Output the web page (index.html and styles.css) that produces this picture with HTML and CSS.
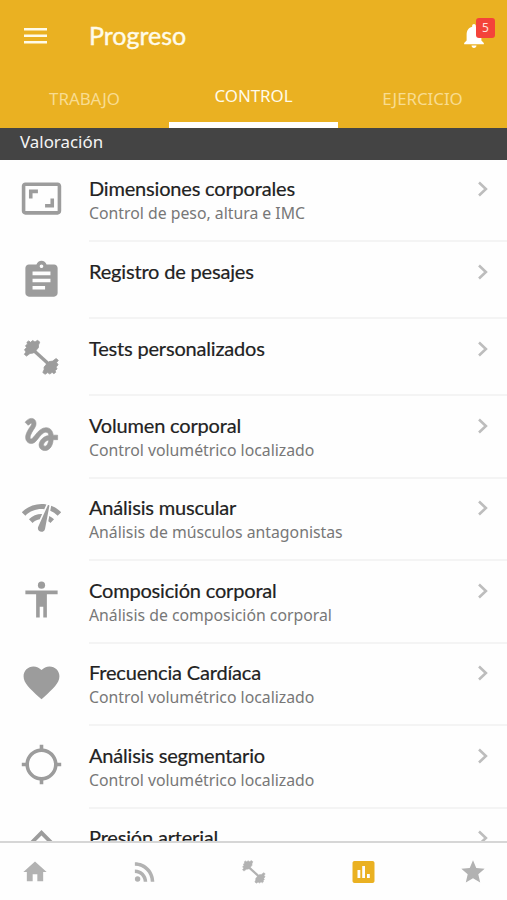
FILE: index.html
```
<!DOCTYPE html>
<html lang="es">
<head>
<meta charset="utf-8">
<meta name="viewport" content="width=device-width, initial-scale=1">
<title>Progreso</title>
<link rel="stylesheet" href="styles.css">
</head>
<body>
<svg class="defs" width="0" height="0" aria-hidden="true">
  <symbol id="chevron" viewBox="0 0 12 16"><path d="M2 1.5 8.9 8 2 14.5" fill="none" stroke="currentColor" stroke-width="2.6"/></symbol>
  <symbol id="dumbbell" viewBox="0 0 36 36">
    <path d="M7 8 29 28" fill="none" stroke="currentColor" stroke-width="3.4"/>
    <path id="plates" stroke="currentColor" stroke-width=".8" stroke-linejoin="round" d="M.8 14.800 2.500 12.500 1 10.300 3 8 2 6.200 4 4.500 3.400 2.800 5.200 1.400 7 2.800 9.200 1 11.500 2.500 14 .8 16.300 2.600 15 5.500 15 8 12.500 11 10 13.500 6.500 14 3 16.600Z"/>
    <use href="#plates" transform="rotate(180 17.8 17.8)"/>
  </symbol>
</svg>
<div class="app">
  <header class="header">
    <div class="bar">
      <svg class="menu" viewBox="0 0 23 16"><path d="M0 1.3h23M0 7.7h23M0 14.2h23" stroke="currentColor" stroke-width="2.5"/></svg>
      <h1 class="heading">Progreso</h1>
      <div class="alerts">
        <svg class="bell" viewBox="4 2.5 16 19.5"><path d="M12 22c1.1 0 2-.9 2-2h-4c0 1.1.89 2 2 2zm6-6v-5c0-3.07-1.64-5.64-4.5-6.32V4c0-.83-.67-1.5-1.5-1.5s-1.5.67-1.5 1.5v.68C7.63 5.36 6 7.92 6 11v5l-2 2v1h16v-1l-2-2z"/></svg>
        <span class="badge">5</span>
      </div>
    </div>
    <nav class="tabs">
      <a class="tab">TRABAJO</a>
      <a class="tab active">CONTROL</a>
      <a class="tab">EJERCICIO</a>
    </nav>
  </header>
  <h2 class="section">Valoración</h2>
  <main class="list">
    <article class="row">
      <svg class="icon" viewBox="0 0 24 24"><path d="M19 12h-2v3h-3v2h5v-5zM7 9h3V7H5v5h2V9zm14-6H3c-1.1 0-2 .9-2 2v14c0 1.1.9 2 2 2h18c1.1 0 2-.9 2-2V5c0-1.1-.9-2-2-2zm0 16.01H3V4.99h18v14.02z"/></svg>
      <div class="body"><div class="text"><h3>Dimensiones corporales</h3><p>Control de peso, altura e IMC</p></div><svg class="chev"><use href="#chevron"/></svg></div>
    </article>
    <article class="row short">
      <svg class="icon" viewBox="0 0 24 24"><path d="M19 3h-4.18C14.4 1.84 13.3 1 12 1c-1.3 0-2.4.84-2.82 2H5c-1.1 0-2 .9-2 2v14c0 1.1.9 2 2 2h14c1.1 0 2-.9 2-2V5c0-1.1-.9-2-2-2zm-7 0c.55 0 1 .45 1 1s-.45 1-1 1-1-.45-1-1 .45-1 1-1zm2 14H7v-2h7v2zm3-4H7v-2h10v2zm0-4H7V7h10v2z"/></svg>
      <div class="body"><div class="text"><h3>Registro de pesajes</h3></div><svg class="chev"><use href="#chevron"/></svg></div>
    </article>
    <article class="row short">
      <svg class="icon" viewBox="-3.5 -3.5 43 43"><use href="#dumbbell" width="36" height="36"/></svg>
      <div class="body"><div class="text"><h3>Tests personalizados</h3></div><svg class="chev"><use href="#chevron"/></svg></div>
    </article>
    <article class="row">
      <svg class="icon" viewBox="0 0 24 24"><path stroke="currentColor" stroke-width=".35" d="M4.59 6.89c.7-.71 1.4-1.35 1.71-1.22.5.2 0 1.03-.3 1.52-.25.42-2.86 3.89-2.86 6.31 0 1.28.48 2.34 1.34 2.98.75.56 1.74.73 2.64.46 1.07-.31 1.95-1.4 3.06-2.77 1.21-1.49 2.83-3.44 4.08-3.44 1.63 0 1.65 1.01 1.76 1.79-3.78.64-5.38 3.67-5.38 5.37 0 1.7 1.44 3.09 3.21 3.09 1.63 0 4.29-1.33 4.69-6.1H21v-2.5h-2.47c-.15-1.65-1.09-4.2-4.03-4.2-2.25 0-4.18 1.91-4.94 2.84-.58.73-2.06 2.48-2.29 2.72-.25.3-.68.84-1.11.84-.45 0-.72-.83-.36-1.92.35-1.09 1.4-2.86 1.85-3.52.78-1.14 1.3-1.92 1.3-3.28C8.95 3.69 7.31 3 6.44 3 5.12 3 3.97 4 3.72 4.25c-.36.36-.66.66-.88.93l1.75 1.71zm9.29 11.66c-.31 0-.74-.26-.74-.72 0-.6.73-2.2 2.87-2.76-.3 2.69-1.43 3.48-2.13 3.48z"/></svg>
      <div class="body"><div class="text"><h3>Volumen corporal</h3><p>Control volumétrico localizado</p></div><svg class="chev"><use href="#chevron"/></svg></div>
    </article>
    <article class="row">
      <svg class="icon" viewBox="0 0 24 24"><path d="M15.9 5c-.17 0-.32.09-.41.23l-.07.15-5.18 11.65c-.16.29-.26.61-.26.96 0 1.11.9 2.01 2.01 2.01.96 0 1.77-.68 1.96-1.59l.01-.03L16.4 5.5c0-.28-.22-.5-.5-.5zM1 9l2 2c2.88-2.88 6.79-4.08 10.53-3.62l1.19-2.68C9.89 3.84 4.74 5.27 1 9zm20 2 2-2c-1.64-1.64-3.55-2.82-5.59-3.57l-.53 2.82c1.5.62 2.9 1.53 4.12 2.75zm-4 4 2-2c-.8-.8-1.7-1.42-2.66-1.89l-.55 2.92c.42.27.83.59 1.21.97zM5 13l2 2c1.13-1.13 2.56-1.79 4.03-2l1.28-2.88c-2.63-.08-5.3.87-7.31 2.88z"/></svg>
      <div class="body"><div class="text"><h3>Análisis muscular</h3><p>Análisis de músculos antagonistas</p></div><svg class="chev"><use href="#chevron"/></svg></div>
    </article>
    <article class="row">
      <svg class="icon" viewBox="0 0 24 24"><circle cx="12" cy="4" r="2"/><path d="M21 9h-6v13h-2v-6h-2v6H9V9H3V7h18v2z"/></svg>
      <div class="body"><div class="text"><h3>Composición corporal</h3><p>Análisis de composición corporal</p></div><svg class="chev"><use href="#chevron"/></svg></div>
    </article>
    <article class="row">
      <svg class="icon" viewBox="0 0 24 24"><path d="M12 21.35l-1.45-1.32C5.4 15.36 2 12.28 2 8.5 2 5.42 4.42 3 7.5 3c1.74 0 3.41.81 4.5 2.09C13.09 3.81 14.76 3 16.5 3 19.58 3 22 5.42 22 8.5c0 3.78-3.4 6.86-8.55 11.54L12 21.35z"/></svg>
      <div class="body"><div class="text"><h3>Frecuencia Cardíaca</h3><p>Control volumétrico localizado</p></div><svg class="chev"><use href="#chevron"/></svg></div>
    </article>
    <article class="row">
      <svg class="icon" viewBox="0 0 24 24"><path d="M20.94 11c-.46-4.17-3.77-7.48-7.94-7.94V1h-2v2.06C6.83 3.52 3.52 6.83 3.06 11H1v2h2.06c.46 4.17 3.77 7.48 7.94 7.94V23h2v-2.06c4.17-.46 7.48-3.77 7.94-7.94H23v-2h-2.06zM12 19c-3.87 0-7-3.13-7-7s3.13-7 7-7 7 3.13 7 7-3.13 7-7 7z"/></svg>
      <div class="body"><div class="text"><h3>Análisis segmentario</h3><p>Control volumétrico localizado</p></div><svg class="chev"><use href="#chevron"/></svg></div>
    </article>
    <article class="row">
      <svg class="icon" viewBox="0 0 24 24"><path d="M12 2.300 5.300 9l1.500 1.500L12 5.300l5.200 5.200 1.500-1.500z"/></svg>
      <div class="body"><div class="text"><h3>Presión arterial</h3></div><svg class="chev"><use href="#chevron"/></svg></div>
    </article>
  </main>
  <footer class="nav">
    <svg class="nav-icon" viewBox="0 0 24 24"><path d="M10 20v-6h4v6h5v-8h3L12 3 2 12h3v8z"/></svg>
    <svg class="nav-icon" viewBox=".9 1 22.4 22.4"><circle cx="6.18" cy="17.82" r="2.18"/><path d="M4 4.44v2.83c7.03 0 12.73 5.7 12.73 12.73h2.83c0-8.59-6.97-15.56-15.56-15.56zm0 5.66v2.83c3.9 0 7.07 3.17 7.07 7.07h2.83c0-5.47-4.43-9.9-9.9-9.9z"/></svg>
    <svg class="nav-icon" viewBox="-3 -3 42 42"><use href="#dumbbell" width="36" height="36"/></svg>
    <svg class="nav-icon selected" viewBox="-1.500 -2 28 28"><path fill-rule="evenodd" d="M3 1h18c1.1 0 2 .9 2 2v18c0 1.1-.9 2-2 2H3c-1.1 0-2-.9-2-2V3c0-1.1.9-2 2-2zm3 9v8h2.800v-8zm4.700-4v12h2.800V6zm4.800 8v4h2.800v-4z"/></svg>
    <svg class="nav-icon" viewBox="0 0 24 24"><path d="M12 17.27 18.180 21l-1.640-7.030L22 9.240l-7.190-.61L12 2 9.190 8.630 2 9.240l5.460 4.730L5.820 21z"/></svg>
  </footer>
</div>
</body>
</html>
```
FILE: styles.css
```
* { box-sizing: border-box; }
body { margin: 0; background: #fefefe; font-family: "Noto Sans", "Open Sans", sans-serif; }
h1, h2, h3, p { margin: 0; font-weight: 400; }
svg { display: block; fill: currentColor; flex: none; }
.defs { position: absolute; }
.app { height: 900px; display: flex; flex-direction: column; overflow: hidden; }

.header { height: 127.5px; flex: none; background: #eab122; color: #fffbe9; display: flex; flex-direction: column; }
.bar { height: 71px; display: flex; align-items: center; padding: 0 12px 0 24px; }
.menu { width: 23px; height: 16px; }
.heading { flex: 1; margin-left: 42px; padding-bottom: 2px; font: 400 25px/30px Lato, sans-serif; -webkit-text-stroke: .4px currentColor; }
.alerts { position: relative; width: 31px; height: 36px; padding-top: 6px; color: #fff; }
.bell { width: 20px; height: 24px; }
.badge { position: absolute; left: 12px; top: 0; width: 19px; height: 20px; border-radius: 3px; background: #f4433a; color: #ffe4dc; font-size: 12px; line-height: 19px; text-align: center; }

.tabs { flex: 1; display: grid; grid-template-columns: repeat(3, 1fr); }
.tab { display: flex; align-items: center; justify-content: center; padding-bottom: 1px; font-size: 16.9px; letter-spacing: -.05px; color: #f8dc91; }
.tab.active { padding-bottom: 2px; color: #fffbe9; border-bottom: 6px solid #fff; }

.section { height: 32px; flex: none; padding-left: 20px; background: #444; color: #f5f5f5; font-size: 16.9px; line-height: 28px; }

.list { flex: 1; min-height: 0; overflow: hidden; }
.row { height: 82.5px; display: flex; padding-left: 20px; }
.row.short { height: 77px; }
.icon { width: 43px; height: 43px; margin-top: 17px; color: #9c9c9c; }
.body { flex: 1; margin-left: 26px; padding-right: 18.5px; display: flex; justify-content: space-between; border-bottom: 2px solid #f4f4f4; }
.text { padding-top: 16.5px; white-space: nowrap; }
.text h3 { font: 400 20px/25px Lato, sans-serif; letter-spacing: -.18px; color: #222; -webkit-text-stroke: .2px currentColor; }
.text p { font-size: 15.8px; line-height: 24px; color: #777; }
.chev { width: 12px; height: 16px; margin-top: 21.5px; color: #bdbdbd; }

.nav { height: 59px; flex: none; border-top: 2px solid #d6d6d6; display: flex; align-items: center; justify-content: space-between; padding: 0 20px 0 21px; background: #fefefe; }
.nav-icon { width: 28px; height: 28px; color: #b2b2b2; }
.nav-icon.selected { color: #eab122; }
```
